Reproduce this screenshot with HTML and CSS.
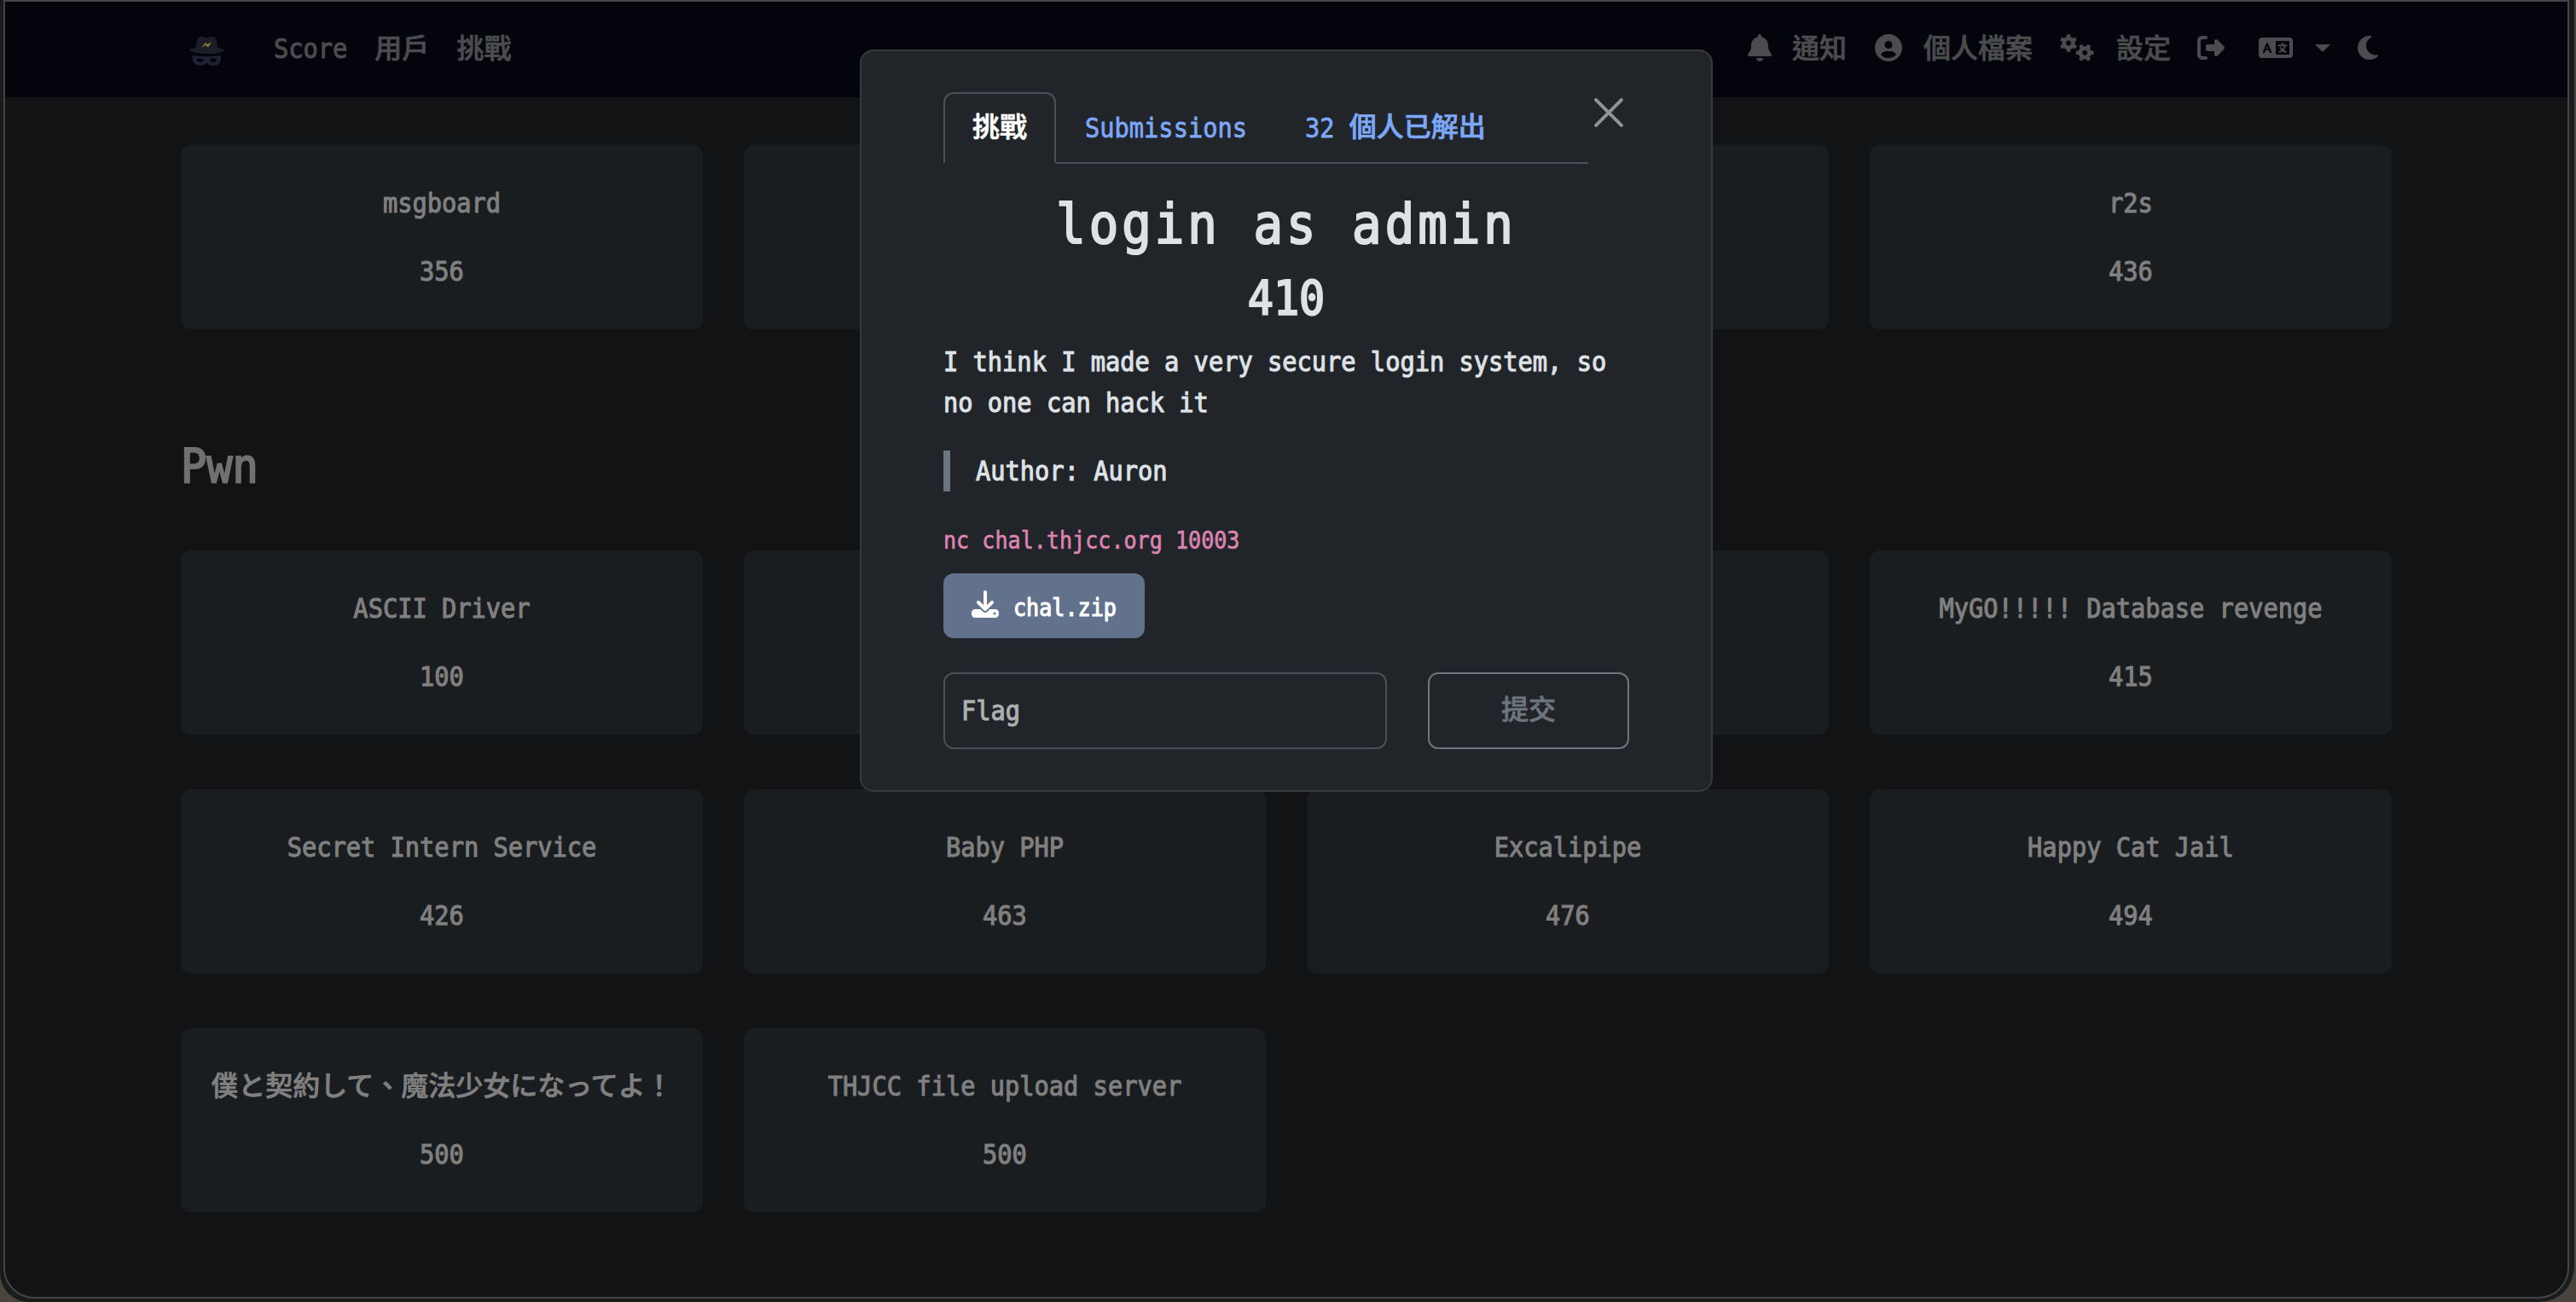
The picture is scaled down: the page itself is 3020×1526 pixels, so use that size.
FILE: index.html
```html
<!DOCTYPE html>
<html lang="zh-Hant">
<head>
<meta charset="utf-8">
<title>THJCC</title>
<link rel="stylesheet" href="styles.css">
</head>
<body>
<div class="window">
  <nav class="navbar">
    <svg class="brand" viewBox="215 35 56 60">
      <path d="M229 57 Q231 44 234 43 Q237 42 240 44 Q242 45 244 44 Q248 42 251 43 Q254 44 255 56 Q263 57 263 59 Q261 63 242 63 Q223 62 222 58 Q223 56 229 57Z" fill="#1b1d28"/>
      <path d="M236 56 L241 50 L243 52 L248.500 49 L244 55.500 L241 53Z" fill="#8b783a"/>
      <path fill-rule="evenodd" d="M225.500 65 Q242 67 259 65 Q260 77 250 77 Q245 77 242 73.500 Q239 77 234 77 Q225 76 225.500 65Z M230 69.500 Q231 73 235 73 Q239 72.500 239 69.500 Q234 67.500 230 69.500Z M254 69.500 Q253 73 249 73 Q246 72.500 246 69.500 Q250 67.500 254 69.500Z" fill="#1c2135"/>
    </svg>
    <div class="links"><a class="mono">Score</a><a>用戶</a><a>挑戰</a></div>
    <div class="tools">
      <svg class="bell" viewBox="0 0 448 512"><path d="M224 0c-17.7 0-32 14.3-32 32V51.2C119 66 64 130.6 64 208v18.8c0 47-17.3 92.4-48.5 127.6l-7.4 8.3c-8.4 9.4-10.4 22.9-5.3 34.4S19.4 416 32 416H416c12.6 0 24-7.4 29.2-18.9s3.1-25-5.3-34.4l-7.4-8.3C401.3 319.2 384 273.9 384 226.8V208c0-77.4-55-142-128-156.8V32c0-17.7-14.3-32-32-32zm45.3 493.3c12-12 18.7-28.3 18.7-45.3H224 160c0 17 6.7 33.3 18.7 45.3s28.3 18.7 45.3 18.7s33.3-6.7 45.3-18.7z"/></svg>
      <a>通知</a>
      <svg class="user" viewBox="0 0 512 512"><path d="M399 384.2C376.9 345.8 335.4 320 288 320H224c-47.4 0-88.9 25.8-111 64.2c35.2 39.2 86.2 63.8 143 63.8s107.8-24.7 143-63.8zM0 256a256 256 0 1 1 512 0A256 256 0 1 1 0 256zm256 16a72 72 0 1 0 0-144 72 72 0 1 0 0 144z"/></svg>
      <a>個人檔案</a>
      <svg class="gears" viewBox="0 0 40 32">
        <defs><g id="gear"><circle r="5.3" fill="none" stroke="currentColor" stroke-width="4.8"/><g stroke="currentColor" stroke-width="4.4"><path d="M0-7V-10.200M0 7V10.200"/><path transform="rotate(60)" d="M0-7V-10.200M0 7V10.200"/><path transform="rotate(120)" d="M0-7V-10.200M0 7V10.200"/></g></g></defs>
        <use href="#gear" transform="translate(10 10.500)"/>
        <use href="#gear" transform="translate(29.200 21.700) rotate(30)"/>
      </svg>
      <a>設定</a>
      <svg class="logout" viewBox="0 0 512 512"><path d="M377.9 105.9L500.7 228.7c7.2 7.2 11.3 17.1 11.3 27.3s-4.1 20.1-11.3 27.3L377.9 406.1c-6.4 6.4-15 9.9-24 9.9c-18.7 0-33.9-15.2-33.9-33.9l0-62.1-128 0c-17.7 0-32-14.3-32-32l0-64c0-17.7 14.3-32 32-32l128 0 0-62.1c0-18.7 15.2-33.9 33.9-33.9c9 0 17.6 3.6 24 9.9zM160 96L96 96c-17.7 0-32 14.3-32 32l0 256c0 17.7 14.3 32 32 32l64 0c17.7 0 32 14.3 32 32s-14.3 32-32 32l-64 0c-53 0-96-43-96-96L0 128C0 75 43 32 96 32l64 0c17.7 0 32 14.3 32 32s-14.3 32-32 32z"/></svg>
      <svg class="lang" viewBox="0 0 40 32">
        <path fill-rule="evenodd" d="M4 4H36a4 4 0 0 1 4 4V24a4 4 0 0 1-4 4H4a4 4 0 0 1-4-4V8a4 4 0 0 1 4-4ZM20 8V24H36V8Z"/>
        <path d="M6 21L10 11.500L14 21M7.400 18H12.600" fill="none" stroke="#04040d" stroke-width="2.2" stroke-linecap="round" stroke-linejoin="round"/>
        <path d="M28 10.800V12.800M23.500 13.200H32.500M31 13.500Q30 18.500 24.500 20.800M25.500 16Q28 20 31.700 21" fill="none" stroke="currentColor" stroke-width="1.9" stroke-linecap="round"/>
      </svg>
      <i class="caret"></i>
      <svg class="moon" viewBox="0 0 384 512"><path d="M223.5 32C100 32 0 132.3 0 256S100 480 223.5 480c60.6 0 115.5-24.2 155.8-63.4c5-4.9 6.3-12.5 3.1-18.7s-10.1-9.7-17-8.5c-9.8 1.7-19.8 2.6-30.1 2.6c-96.9 0-175.5-78.8-175.5-176c0-65.8 36-123.1 89.3-153.3c6.1-3.5 9.2-10.5 7.7-17.3s-7.3-11.9-14.3-12.5c-6.3-.5-12.6-.8-19-.8z"/></svg>
    </div>
  </nav>
  <main>
    <div class="grid">
      <div class="card"><p class="mono">msgboard</p><p class="mono">356</p></div>
      <div class="card"></div>
      <div class="card"></div>
      <div class="card"><p class="mono">r2s</p><p class="mono">436</p></div>
    </div>
    <h3 class="mono">Pwn</h3>
    <div class="grid">
      <div class="card"><p class="mono">ASCII Driver</p><p class="mono">100</p></div>
      <div class="card"></div>
      <div class="card"></div>
      <div class="card"><p class="mono">MyGO!!!!! Database revenge</p><p class="mono">415</p></div>
      <div class="card"><p class="mono">Secret Intern Service</p><p class="mono">426</p></div>
      <div class="card"><p class="mono">Baby PHP</p><p class="mono">463</p></div>
      <div class="card"><p class="mono">Excalipipe</p><p class="mono">476</p></div>
      <div class="card"><p class="mono">Happy Cat Jail</p><p class="mono">494</p></div>
      <div class="card"><p class="cjk">僕と契約して、魔法少女になってよ！</p><p class="mono">500</p></div>
      <div class="card"><p class="mono">THJCC file upload server</p><p class="mono">500</p></div>
    </div>
  </main>
</div>
<div class="modal">
  <div class="head">
    <div class="tabs">
      <a class="tab active">挑戰</a>
      <a class="tab"><span class="mono">Submissions</span></a>
      <a class="tab"><span class="mono">32 </span>個人已解出</a>
    </div>
    <svg class="close" viewBox="0 0 32 32"><path d="M2 2L30 30M30 2L2 30" stroke="#909294" stroke-width="3.8" stroke-linecap="round"/></svg>
  </div>
  <h1 class="mono">login as admin</h1>
  <h2 class="mono">410</h2>
  <p class="desc mono">I think I made a very secure login system, so<br>no one can hack it</p>
  <blockquote><span class="mono">Author: Auron</span></blockquote>
  <code class="mono">nc chal.thjcc.org 10003</code>
  <a class="file">
    <svg viewBox="0 0 512 512"><path d="M288 32c0-17.7-14.3-32-32-32s-32 14.3-32 32V274.7l-73.4-73.4c-12.5-12.5-32.8-12.5-45.3 0s-12.5 32.8 0 45.3l128 128c12.5 12.5 32.8 12.5 45.3 0l128-128c12.5-12.5 12.5-32.8 0-45.3s-32.8-12.5-45.3 0L288 274.7V32zM64 352c-35.3 0-64 28.7-64 64v32c0 35.3 28.7 64 64 64H448c35.3 0 64-28.7 64-64V416c0-35.3-28.7-64-64-64H346.5l-45.3 45.3c-25 25-65.5 25-90.5 0L165.5 352H64zm368 56a24 24 0 1 1 0 48 24 24 0 1 1 0-48z"/></svg>
    <span class="mono">chal.zip</span>
  </a>
  <div class="form">
    <div class="input"><span class="mono">Flag</span></div>
    <div class="submit">提交</div>
  </div>
</div>
</body>
</html>
```
FILE: styles.css
```css
* { box-sizing: border-box; margin: 0; padding: 0; }
html, body { height: 1526px; overflow: hidden; }
html { background: #4a443d; }
body {
  position: relative;
  padding: 0 6px 4px 4px;
  border-right: 2px solid #424445;
  border-radius: 0 0 42px 34px;
  background: #1a1c1b;
  font: 500 32px/48px "Noto Sans CJK TC", sans-serif;
  -webkit-text-stroke: 0.7px currentColor;
  color: #808080;
}
/* tall, narrow terminal face */
.mono {
  display: inline-block;
  font-family: "DejaVu Sans Mono", monospace;
  font-size: 28.7px;
  font-weight: 400;
  -webkit-text-stroke: 1px currentColor;
  transform: scaleY(1.115);
  white-space: pre;
}
.window {
  height: 1522px;
  border: 2px solid #424445;
  border-radius: 0 0 36px 36px;
  background: #121314;
  overflow: hidden;
}
.navbar {
  display: flex;
  height: 112px;
  padding: 0 222px 0 209px;
  background: #04040d;
  color: #4b4c4e;
}
.brand { width: 56px; height: 60px; margin-top: 33px; }
.links { display: flex; gap: 32px; margin: 28px 0 0 50px; }
.links .mono { margin-top: 5px; }
.tools { display: flex; margin: 28px 0 0 auto; }
.tools svg { height: 32px; margin-top: 10px; fill: currentColor; }
.tools .bell { width: 28px; margin-right: 24px; }
.tools .user { width: 32px; margin-left: 33px; margin-right: 25px; }
.tools .gears { width: 40px; margin-left: 32px; margin-right: 26px; }
.tools .logout { width: 32px; margin-left: 31px; margin-right: 40px; }
.tools .lang { width: 40px; }
.caret { margin: 22px 32px 0 26px; width: 18px; height: 9px; background: currentColor; clip-path: polygon(0 0, 100% 0, 50% 100%); }
.tools .moon { width: 24px; }
main { padding: 56px 206px 0; }
.grid { display: grid; grid-template-columns: repeat(4, 612px); grid-auto-rows: 216px; gap: 64px 48px; }
.card { display: flex; flex-direction: column; align-items: center; gap: 32px; padding-top: 43.5px; border-radius: 12px; background: #1a1d20; white-space: nowrap; }
.cjk { height: 48px; line-height: 42px; }
h3.mono { display: block; width: 200px; height: 68px; margin: 126px 0 65px; font-size: 50.2px; line-height: 68px; color: #707173; }
.modal {
  position: absolute;
  left: 1008px;
  top: 58px;
  width: 1000px;
  height: 870px;
  padding: 48px 96px;
  border: 2px solid #37393b;
  border-radius: 16px;
  background: #212529;
  color: #dee2e6;
}
.head { display: flex; justify-content: space-between; }
.tabs { display: flex; width: 756px; height: 84px; border-bottom: 2px solid #495057; }
.tab { height: 84px; padding: 12px 32px; border: 2px solid transparent; color: #7da7f8; white-space: nowrap; }
.tab .mono { -webkit-text-stroke-width: 0.7px; }
.tab.active { border-color: #495057; border-bottom-color: #212529; border-radius: 12px 12px 0 0; background: #212529; color: #fff; }
.close { width: 34px; height: 34px; margin: 7px 7px 0 0; }
h1.mono, h2.mono { display: block; text-align: center; }
h1.mono { margin-top: 34px; font-size: 57.4px; line-height: 76px; letter-spacing: 4px; }
h2.mono { margin-top: 13px; font-size: 50.2px; line-height: 68px; }
h1.mono, h2.mono, h3.mono { -webkit-text-stroke-width: 2px; }
.desc.mono { display: block; margin-top: 22px; line-height: 43px; }
blockquote { height: 48px; margin-top: 37px; padding-left: 30px; border-left: 8px solid #6c757d; line-height: 40px; }
code.mono { display: block; margin-top: 38px; font-size: 25.1px; line-height: 40px; color: #dd84b0; -webkit-text-stroke-width: 0.6px; }
.file { display: flex; gap: 17px; width: 236px; height: 76px; margin-top: 18px; padding: 20px 33px; border-radius: 12px; background: #62728c; color: #fff; }
.file svg { width: 32px; height: 32px; fill: currentColor; }
.file .mono { font-size: 25.1px; line-height: 41px; }
.form { display: flex; gap: 48px; margin-top: 40px; }
.input, .submit { height: 90px; border: 2px solid #495057; border-radius: 12px; line-height: 79px; }
.input { width: 520px; padding-left: 19px; color: #adafb1; }
.submit { width: 236px; border-color: #6c757d; color: #6c757d; text-align: center; }
```
